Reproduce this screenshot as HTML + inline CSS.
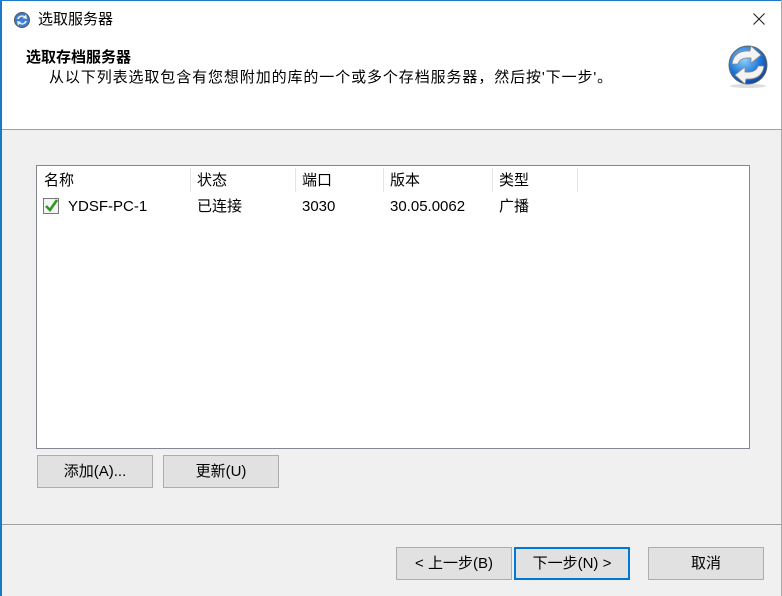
<!DOCTYPE html>
<html><head><meta charset="utf-8"><style>
body{margin:0;width:782px;height:596px;overflow:hidden;background:#f0f0f0;font-family:"Liberation Sans","Noto Sans CJK SC",sans-serif;font-size:15px;color:#000;position:relative}
.a{position:absolute;line-height:20px}
.btn{position:absolute;background:#e1e1e1;border:1px solid #adadad;box-sizing:border-box;text-align:center;line-height:31px;font-size:15px}
.hd{position:absolute;top:171px;font-size:15px;line-height:20px;color:#000}
.sep{position:absolute;top:168px;width:1px;height:24px;background:#e5e5e5}
</style></head><body>
<div class="a" style="left:0;top:0;width:782px;height:129px;background:#fff"></div>
<div class="a" style="left:0;top:0;width:782px;height:1px;background:#1979ca"></div>
<div class="a" style="left:0;top:0;width:2px;height:596px;background:#1979ca"></div>
<div class="a" style="left:781px;top:0;width:1px;height:596px;background:#aaa"></div>
<svg class="a" style="left:13px;top:11px" width="18" height="18" viewBox="0 0 18 18"><circle cx="9" cy="9" r="7.5" fill="#3b7dd0" stroke="#555" stroke-width="1"/><path d="M4 8 Q6 3 12 5 L13 3 L14 8 L9 7 L11 6 Q7 5 6 8Z M14 10 Q12 15 6 13 L5 15 L4 10 L9 11 L7 12 Q11 13 12 10Z" fill="#eee"/></svg>
<div class="a" style="left:38px;top:10px;font-size:15px">选取服务器</div>
<svg class="a" style="left:753px;top:13px" width="12" height="12" viewBox="0 0 12 12"><path d="M0.5 0.5 L11.5 11.5 M11.5 0.5 L0.5 11.5" stroke="#222" stroke-width="1.1"/></svg>
<div class="a" style="left:26px;top:48px;font-weight:bold;font-size:15px">选取存档服务器</div>
<div class="a" style="left:49px;top:68px;font-size:15px;letter-spacing:0.9px">从以下列表选取包含有您想附加的库的一个或多个存档服务器，然后按'下一步'。</div>
<svg class="a" style="left:724px;top:42px" width="48" height="48" viewBox="0 0 48 48"><defs><radialGradient id="g" cx="0.4" cy="0.35" r="0.7"><stop offset="0" stop-color="#8fd0ff"/><stop offset="0.6" stop-color="#1f78d8"/><stop offset="1" stop-color="#0b3f99"/></radialGradient></defs><ellipse cx="24" cy="44" rx="18" ry="2" fill="#ddd"/><circle cx="24" cy="23" r="19" fill="url(#g)" stroke="#666"/><path d="M8 22 Q10 8 26 9 L27 4 L37 13 L27 21 L27 16 Q16 15 14 22Z M40 24 Q38 38 22 37 L21 42 L11 33 L21 25 L21 30 Q32 31 34 24Z" fill="#f4f4f4" stroke="#888" stroke-width="0.8"/></svg>
<div class="a" style="left:2px;top:129px;width:779px;height:1px;background:#a0a0a0"></div>
<div class="a" style="left:36px;top:165px;width:714px;height:284px;background:#fff;border:1px solid #828790;box-sizing:border-box"></div>
<div class="hd" style="left:44px">名称</div><div class="sep" style="left:190px"></div>
<div class="hd" style="left:197px">状态</div><div class="sep" style="left:295px"></div>
<div class="hd" style="left:302px">端口</div><div class="sep" style="left:383px"></div>
<div class="hd" style="left:390px">版本</div><div class="sep" style="left:492px"></div>
<div class="hd" style="left:499px">类型</div><div class="sep" style="left:577px"></div>
<svg class="a" style="left:43px;top:198px" width="17" height="17" viewBox="0 0 17 17"><rect x="0.5" y="0.5" width="15" height="15" fill="#f4f4f4" stroke="#777"/><path d="M3 8 L7 12 L14 2" fill="none" stroke="#2a9a1f" stroke-width="2.6"/></svg>
<div class="a" style="left:68px;top:197px">YDSF-PC-1</div>
<div class="a" style="left:197px;top:197px">已连接</div>
<div class="a" style="left:302px;top:197px">3030</div>
<div class="a" style="left:390px;top:197px">30.05.0062</div>
<div class="a" style="left:499px;top:197px">广播</div>
<div class="btn" style="left:37px;top:455px;width:116px;height:33px">添加(A)...</div>
<div class="btn" style="left:163px;top:455px;width:116px;height:33px">更新(U)</div>
<div class="a" style="left:2px;top:524px;width:779px;height:1px;background:#a0a0a0"></div>
<div class="btn" style="left:396px;top:547px;width:116px;height:33px">&lt; 上一步(B)</div>
<div class="btn" style="left:514px;top:547px;width:116px;height:33px;border:2px solid #0078d7;line-height:29px">下一步(N) &gt;</div>
<div class="btn" style="left:648px;top:547px;width:116px;height:33px">取消</div>
</body></html>
